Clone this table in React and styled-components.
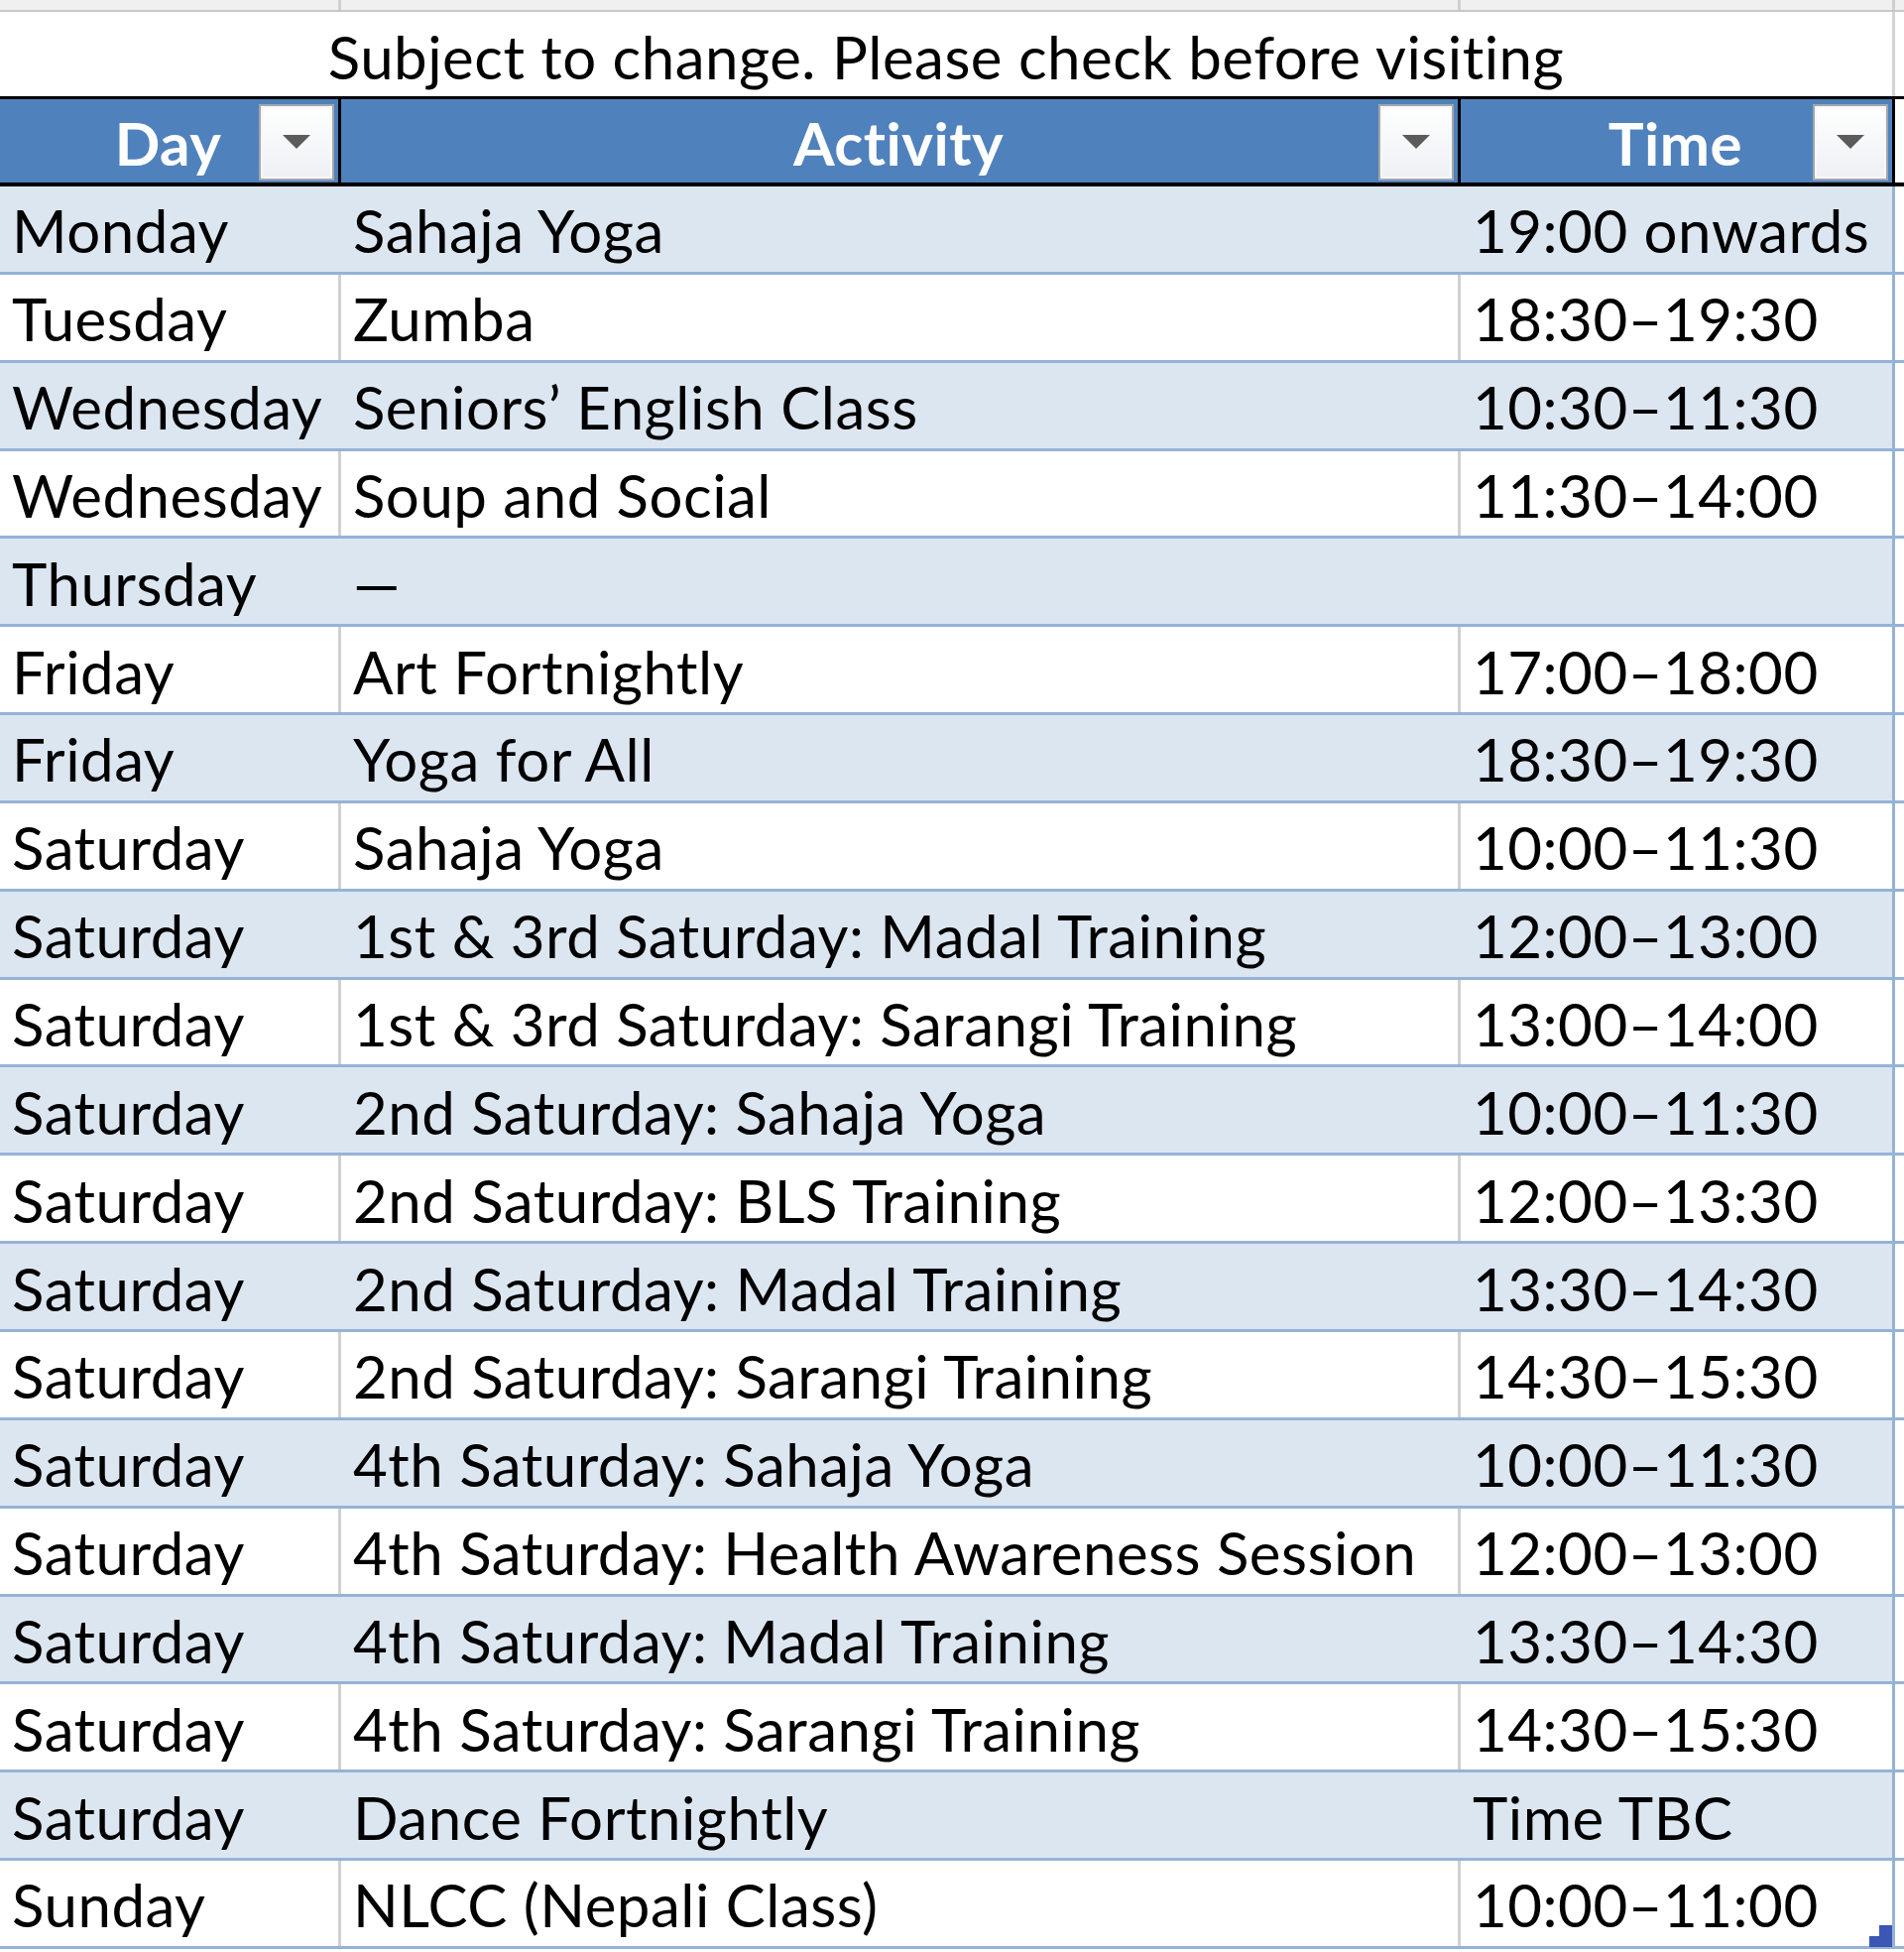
import React from 'react';
import styled, { createGlobalStyle, css } from 'styled-components';

const palette = {
  header: '#4f81bd',
  band: '#dce6f1',
  rowLine: '#95b3d7',
  grid: '#d0d0d0',
  strip: '#f0f0f0',
  handle: '#3b56b5',
};

const columns = '344px 1129px 438px 1fr';
const rowHeight = 88.85;

const schedule = [
  ['Monday', 'Sahaja Yoga', '19:00 onwards'],
  ['Tuesday', 'Zumba', '18:30–19:30'],
  ['Wednesday', 'Seniors’ English Class', '10:30–11:30'],
  ['Wednesday', 'Soup and Social', '11:30–14:00'],
  ['Thursday', '—', ''],
  ['Friday', 'Art Fortnightly', '17:00–18:00'],
  ['Friday', 'Yoga for All', '18:30–19:30'],
  ['Saturday', 'Sahaja Yoga', '10:00–11:30'],
  ['Saturday', '1st & 3rd Saturday: Madal Training', '12:00–13:00'],
  ['Saturday', '1st & 3rd Saturday: Sarangi Training', '13:00–14:00'],
  ['Saturday', '2nd Saturday: Sahaja Yoga', '10:00–11:30'],
  ['Saturday', '2nd Saturday: BLS Training', '12:00–13:30'],
  ['Saturday', '2nd Saturday: Madal Training', '13:30–14:30'],
  ['Saturday', '2nd Saturday: Sarangi Training', '14:30–15:30'],
  ['Saturday', '4th Saturday: Sahaja Yoga', '10:00–11:30'],
  ['Saturday', '4th Saturday: Health Awareness Session', '12:00–13:00'],
  ['Saturday', '4th Saturday: Madal Training', '13:30–14:30'],
  ['Saturday', '4th Saturday: Sarangi Training', '14:30–15:30'],
  ['Saturday', 'Dance Fortnightly', 'Time TBC'],
  ['Sunday', 'NLCC (Nepali Class)', '10:00–11:00'],
];

const GlobalStyle = createGlobalStyle`
  html, body {
    margin: 0;
    padding: 0;
    background: #fff;
  }
`;

const Sheet = styled.div`
  width: 1920px;
  height: 1968px;
  overflow: hidden;
  background: #fff;
  font-family: Lato, 'Liberation Sans', sans-serif;
  font-size: 60px;
  letter-spacing: 0.5px;
  color: #000;
`;

const rowBase = css`
  display: grid;
  grid-template-columns: ${columns};
  box-sizing: border-box;
`;

const TopStrip = styled.div`
  ${rowBase};
  height: 12px;
  background: ${palette.strip};
  border-bottom: 2px solid #c6c6c6;
`;

const StripCell = styled.div`
  border-right: 3px solid #cfcfcf;
`;

const NoteRow = styled.div`
  ${rowBase};
  height: 85px;
`;

const Note = styled.div`
  grid-column: 1 / 4;
  display: flex;
  align-items: center;
  justify-content: center;
  padding-top: 4px;
  border-right: 3px solid #d4d4d4;
`;

const HeaderRow = styled.div`
  ${rowBase};
  height: 91px;
  background: ${palette.header};
  border-top: 3px solid #000;
  border-bottom: 4px solid #000;
  & > :last-child {
    background: #fff;
  }
`;

const HeaderCell = styled.div`
  display: grid;
  grid-template-columns: 78px 1fr 78px;
  align-items: end;
  padding: 0 2px 2px 0;
  border-right: 3px solid #000;
`;

const HeaderLabel = styled.span`
  grid-column: 2;
  align-self: center;
  padding-top: 6px;
  text-align: center;
  color: #fff;
  font-weight: 700;
`;

const FilterButton = styled.div`
  grid-column: 3;
  width: 76px;
  height: 77px;
  box-sizing: border-box;
  display: flex;
  align-items: center;
  justify-content: center;
  border: 2px solid #a2a6ab;
  background: linear-gradient(#ffffff, #edf0f4);
  box-shadow: inset 0 0 0 2px #f7f8fa;
`;

const Row = styled.div`
  ${rowBase};
  height: ${rowHeight}px;
  background: ${({ $band }) => ($band ? palette.band : '#fff')};
  border-bottom: 3px solid ${palette.rowLine};
  & > :last-child {
    background: #fff;
    border-right: none;
  }
`;

const Cell = styled.div`
  position: relative;
  display: flex;
  align-items: center;
  padding: 3px 0 0 12px;
  white-space: nowrap;
  border-right: 3px solid ${({ $band }) => ($band ? palette.band : palette.grid)};
  ${({ $edge }) =>
    $edge &&
    css`
      border-right-color: ${palette.rowLine};
    `}
`;

const ResizeHandle = styled.svg`
  position: absolute;
  right: 0;
  bottom: -1px;
`;

function Filter() {
  return (
    <FilterButton>
      <svg width="28" height="15" viewBox="0 0 28 15">
        <polygon points="0,0 28,0 14,14" fill="#5b5b5b" />
      </svg>
    </FilterButton>
  );
}

export default function App() {
  return (
    <>
      <GlobalStyle />
      <Sheet>
        <TopStrip>
          <StripCell />
          <StripCell />
          <StripCell />
          <div />
        </TopStrip>
        <NoteRow>
          <Note>Subject to change. Please check before visiting</Note>
          <div />
        </NoteRow>
        <HeaderRow>
          {['Day', 'Activity', 'Time'].map((label) => (
            <HeaderCell key={label}>
              <HeaderLabel>{label}</HeaderLabel>
              <Filter />
            </HeaderCell>
          ))}
          <div />
        </HeaderRow>
        {schedule.map(([day, activity, time], i) => {
          const band = i % 2 === 0;
          const last = i === schedule.length - 1;
          return (
            <Row key={i} $band={band}>
              <Cell $band={band}>{day}</Cell>
              <Cell $band={band}>{activity}</Cell>
              <Cell $band={band} $edge>
                {time}
                {last && (
                  <ResizeHandle width="23" height="22" viewBox="0 0 23 22">
                    <path d="M10 0 H23 V22 H0 V11 H10 Z" fill={palette.handle} />
                  </ResizeHandle>
                )}
              </Cell>
              <div />
            </Row>
          );
        })}
      </Sheet>
    </>
  );
}
